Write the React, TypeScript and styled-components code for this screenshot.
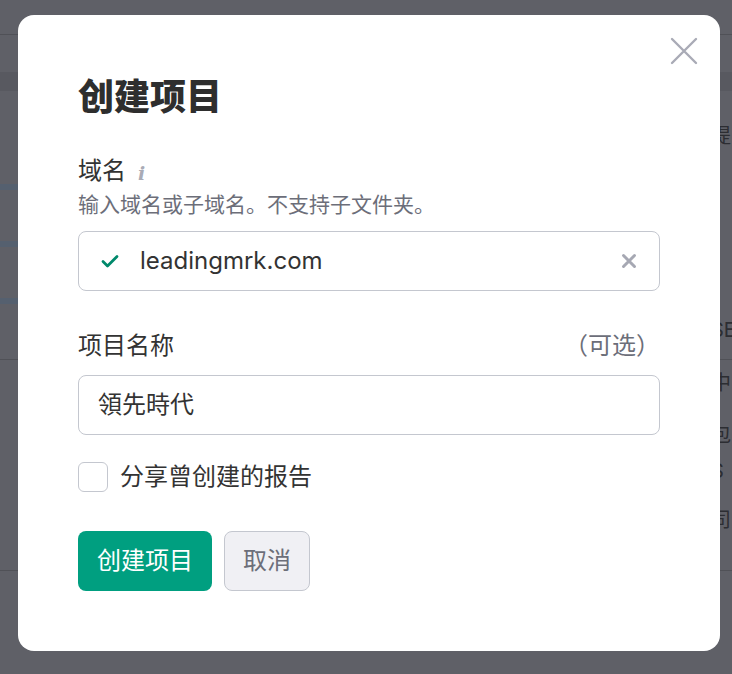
import React from "react";
import styled, { createGlobalStyle } from "styled-components";

const Global = createGlobalStyle`
  html, body { margin: 0; padding: 0; }
  body {
    width: 732px;
    height: 674px;
    overflow: hidden;
    background: #5f6067;
    font-family: "Inter", "Noto Sans CJK SC", sans-serif;
  }
`;

/* ---------- dimmed page behind the dialog ---------- */
const Page = styled.div`
  width: 732px;
  height: 674px;
  display: flex;
  flex-direction: column;
  background: #5f6067;
`;

const BgRow = styled.div<{ $h: number; $band?: boolean; $line?: boolean }>`
  flex: 0 0 auto;
  height: ${(p) => p.$h}px;
  display: flex;
  align-items: center;
  background: ${(p) => (p.$band ? "#585960" : "transparent")};
  border-bottom: ${(p) => (p.$line ? "1px solid #505157" : "none")};
`;

const BlueMark = styled.div`
  width: 18px;
  height: 6px;
  background: #55606f;
`;

const BgText = styled.div`
  margin-left: 711px;
  font-size: 20px;
  line-height: 20px;
  color: #2c2d32;
  white-space: nowrap;
`;

type BgItem = { h: number; band?: boolean; line?: boolean; blue?: boolean; text?: string };

const bgRows: BgItem[] = [
  { h: 34, line: true },
  { h: 37 },
  { h: 19, band: true },
  { h: 35 },
  { h: 20, text: "提" },
  { h: 38 },
  { h: 6, blue: true },
  { h: 51 },
  { h: 6, blue: true },
  { h: 51 },
  { h: 6, blue: true },
  { h: 16 },
  { h: 20, text: "SE" },
  { h: 19, line: true },
  { h: 13 },
  { h: 20, text: "中" },
  { h: 32 },
  { h: 20, text: "包" },
  { h: 16 },
  { h: 20, text: "S" },
  { h: 29 },
  { h: 20, text: "司" },
  { h: 40, line: true },
];

/* ---------- dialog ---------- */
const Dialog = styled.div`
  position: fixed;
  top: 15px;
  left: 18px;
  width: 702px;
  box-sizing: border-box;
  padding: 60px 60px 60px;
  background: #ffffff;
  border-radius: 16px;
  display: flex;
  flex-direction: column;
  color: #333333;
`;

const CloseButton = styled.button`
  position: absolute;
  top: 22px;
  right: 22px;
  width: 28px;
  height: 28px;
  padding: 0;
  border: none;
  background: none;
  display: flex;
  align-items: center;
  justify-content: center;
  cursor: pointer;
`;

const Title = styled.h2`
  margin: 0;
  font-size: 36px;
  line-height: 44px;
  font-weight: 800;
  color: #2e2e2e;
`;

const LabelRow = styled.div<{ $mt: number }>`
  margin-top: ${(p) => p.$mt}px;
  display: flex;
  align-items: center;
  justify-content: space-between;
  height: 32px;
`;

const Label = styled.label`
  display: flex;
  align-items: center;
  gap: 12px;
  font-size: 24px;
  line-height: 32px;
  color: #333333;
`;

const InfoIcon = styled.span`
  font-family: "DejaVu Serif", serif;
  font-style: italic;
  font-weight: 700;
  font-size: 19px;
  line-height: 20px;
  color: #a9abb6;
  margin-top: 3px;
`;

const Optional = styled.span`
  font-size: 24px;
  line-height: 32px;
  color: #6c6e79;
`;

const Hint = styled.div`
  margin-top: 4px;
  font-size: 21px;
  line-height: 28px;
  color: #6c6e79;
`;

const InputBox = styled.div<{ $mt: number }>`
  margin-top: ${(p) => p.$mt}px;
  height: 60px;
  box-sizing: border-box;
  border: 1px solid #c4c7cf;
  border-radius: 8px;
  display: flex;
  align-items: center;
  padding: 0 22px 0 19px;
  gap: 20px;
`;

const IconSlot = styled.span`
  display: flex;
  margin-left: 2px;
`;

const InputText = styled.span`
  flex: 1;
  font-size: 24px;
  line-height: 32px;
  color: #333333;
  white-space: nowrap;
`;

const CheckRow = styled.label`
  margin-top: 27px;
  display: flex;
  align-items: center;
  gap: 12px;
  font-size: 24px;
  line-height: 30px;
  color: #333333;
`;

const CheckBox = styled.span`
  width: 30px;
  height: 30px;
  box-sizing: border-box;
  border: 1px solid #c4c7cf;
  border-radius: 6px;
  background: #fff;
`;

const Actions = styled.div`
  margin-top: 39px;
  display: flex;
  gap: 12px;
`;

const Button = styled.button<{ $primary?: boolean }>`
  height: 60px;
  box-sizing: border-box;
  padding: 0 ${(p) => (p.$primary ? 19 : 18)}px;
  border-radius: 8px;
  font-family: "Inter", "Noto Sans CJK SC", sans-serif;
  font-size: 24px;
  line-height: 32px;
  border: ${(p) => (p.$primary ? "none" : "1px solid #c4c7cf")};
  background: ${(p) => (p.$primary ? "#009f80" : "#f0f0f4")};
  color: ${(p) => (p.$primary ? "#ffffff" : "#6c6e79")};
  cursor: pointer;
`;

const CheckMark = () => (
  <svg width="20" height="16" viewBox="0 0 20 16" fill="none">
    <path d="M3 8.5l4.5 4.5L17 3.5" stroke="#00896b" strokeWidth="2.8" strokeLinecap="round" strokeLinejoin="round" />
  </svg>
);

const ClearIcon = () => (
  <svg width="16" height="16" viewBox="0 0 16 16" fill="none">
    <path d="M2.5 2.5l11 11M13.5 2.5l-11 11" stroke="#a6a8b3" strokeWidth="3" strokeLinecap="round" />
  </svg>
);

const CloseIcon = () => (
  <svg width="28" height="28" viewBox="0 0 28 28" fill="none">
    <path d="M2 2l24 24M26 2L2 26" stroke="#a9abb6" strokeWidth="2.4" strokeLinecap="round" />
  </svg>
);

export default function App() {
  return (
    <>
      <Global />
      <Page>
        {bgRows.map((r, i) => (
          <BgRow key={i} $h={r.h} $band={r.band} $line={r.line}>
            {r.blue && <BlueMark />}
            {r.text && <BgText>{r.text}</BgText>}
          </BgRow>
        ))}
      </Page>
      <Dialog role="dialog">
        <CloseButton aria-label="关闭">
          <CloseIcon />
        </CloseButton>
        <Title>创建项目</Title>

        <LabelRow $mt={36}>
          <Label>
            域名
            <InfoIcon>i</InfoIcon>
          </Label>
        </LabelRow>
        <Hint>输入域名或子域名。不支持子文件夹。</Hint>
        <InputBox $mt={12}>
          <IconSlot>
            <CheckMark />
          </IconSlot>
          <InputText>leadingmrk.com</InputText>
          <ClearIcon />
        </InputBox>

        <LabelRow $mt={39}>
          <Label>项目名称</Label>
          <Optional>（可选）</Optional>
        </LabelRow>
        <InputBox $mt={13}>
          <InputText>領先時代</InputText>
        </InputBox>

        <CheckRow>
          <CheckBox />
          分享曾创建的报告
        </CheckRow>

        <Actions>
          <Button $primary>创建项目</Button>
          <Button>取消</Button>
        </Actions>
      </Dialog>
    </>
  );
}
